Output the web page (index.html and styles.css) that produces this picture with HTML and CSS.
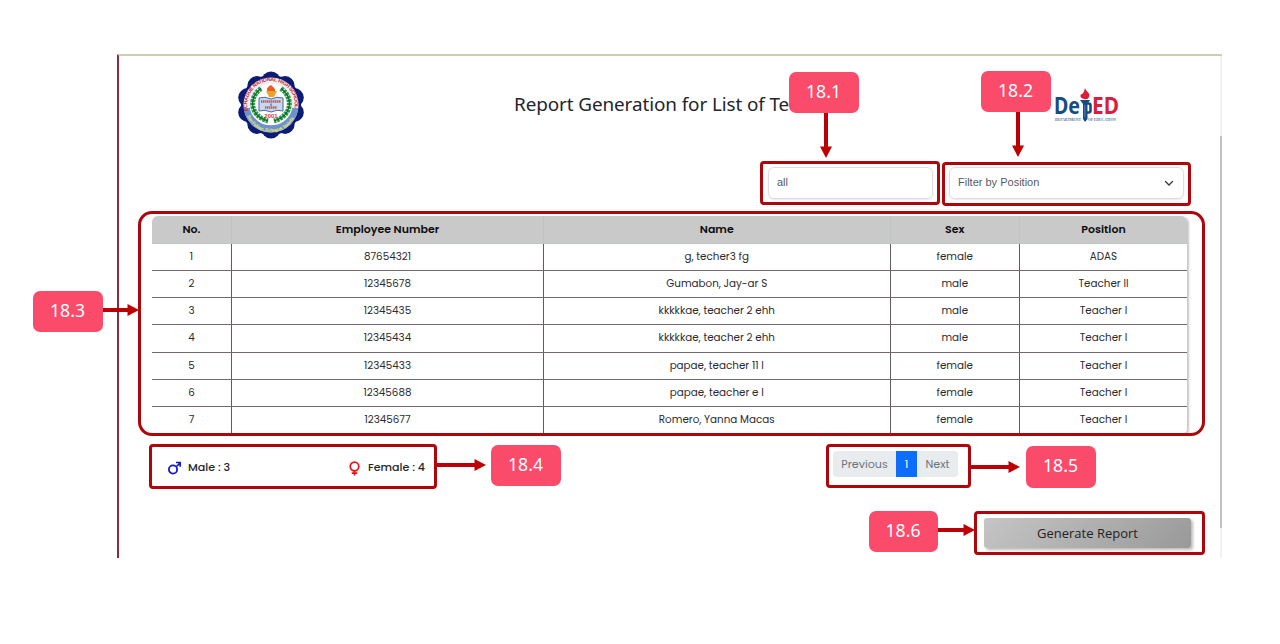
FILE: index.html
```html
<!DOCTYPE html>
<html lang="en">
<head>
<meta charset="utf-8">
<title>Report Generation</title>
<link rel="stylesheet" href="styles.css">
</head>
<body>
<main class="panel">
  <header class="head">
    <svg class="seal" viewBox="0 0 68 68">
      <g fill="#0b1c74">
        <circle cx="34" cy="34" r="30"/>
        <circle cx="34" cy="10" r="9.500"/><circle cx="48.100" cy="14.600" r="9.500"/><circle cx="57.300" cy="26.600" r="9.500"/><circle cx="57.300" cy="41.400" r="9.500"/><circle cx="48.100" cy="53.400" r="9.500"/><circle cx="34" cy="58" r="9.500"/><circle cx="19.900" cy="53.400" r="9.500"/><circle cx="10.700" cy="41.400" r="9.500"/><circle cx="10.700" cy="26.600" r="9.500"/><circle cx="19.900" cy="14.600" r="9.500"/>
      </g>
      <circle cx="34" cy="34" r="27.500" fill="#f1eef4"/>
      <path d="M6.800 37A27.500 27.500 0 0 0 61.200 37L55 37A21 21 0 0 1 13 37Z" fill="#6f92cb"/>
      <circle cx="34" cy="34" r="21.200" fill="#fff"/>
      <path d="M6.700 37A27.500 27.500 0 0 0 61.300 37H55.500A22 22 0 0 1 12.500 37Z" fill="#6f92cb"/>
      <path d="M24 17.500C11 27 13 45 31 50M44 17.500C57 27 55 45 37 50" fill="none" stroke="#2b9748" stroke-width="5" stroke-dasharray="2.600 .8"/>
      <path d="M24 17.500C11 27 13 45 31 50M44 17.500C57 27 55 45 37 50" fill="none" stroke="#0f6a2b" stroke-width="1.200"/>
      <path d="M34 14c-5 3-5 5-2 8h4c4-3 2-4-2-8z" fill="#ed5b20"/>
      <path d="M29 20h11l-3 6h-5z" fill="#e9a529"/>
      <path d="M22 27q6-2 12 1 6-3 12-1v13q-6-2-12 1-6-3-12-1z" fill="#c4daef" stroke="#5264a4" stroke-width="1"/>
      <path d="M24 30.500h20M28 36.500h12" stroke="#da5156" stroke-width="2.400" stroke-dasharray="1.500 .5"/>
      <path d="M34 32.500v2.500" stroke="#8873a6" stroke-width="1.500"/>
      <text class="seal-year" x="34" y="47">2001</text>
      <path id="arc-top" d="M11 40A23.800 23.800 0 1 1 57 40" fill="none"/>
      <path id="arc-bottom" d="M9.800 44A25.800 25.800 0 0 0 58.200 44" fill="none"/>
      <text class="seal-name"><textPath href="#arc-top" textLength="84">ECHAGUE NATIONAL HIGH SCHOOL</textPath></text>
      <text class="seal-place"><textPath href="#arc-bottom" startOffset="1" textLength="58">San Fabian, Echague, Isabela</textPath></text>
    </svg>
    <h1 class="title">Report Generation for List of Te</h1>
    <svg class="deped" viewBox="0 0 66 36">
      <text class="deped-word blue" x="0" y="26" textLength="26" lengthAdjust="spacingAndGlyphs">De</text>
      <path d="M33 15.500h1.500q2 0 2 2v5q0 2-2 2H33" fill="none" stroke="#164b83" stroke-width="2.600"/>
      <text class="deped-word red" x="38" y="26" textLength="27" lengthAdjust="spacingAndGlyphs">ED</text>
      <path d="M31 0c1 4 6 5 4 9q-1 3-5 2-5-1-3-5c1 1 3-1 4-6z" fill="#d81f35"/>
      <path d="M26 12h10l-2.500 4v15l-2.500 3-2-3V16z" fill="#164b83"/>
      <path d="M30.800 17v12" stroke="#7f9fc0" stroke-width=".7"/>
      <text class="deped-sub" x="1" y="33" textLength="26" lengthAdjust="spacingAndGlyphs">DEPARTMENT</text>
      <text class="deped-sub" x="34" y="33" textLength="28" lengthAdjust="spacingAndGlyphs">OF EDUCATION</text>
    </svg>
  </header>

  <section class="filters">
    <div class="field search">all</div>
    <div class="field select"><span>Filter by Position</span>
      <svg class="chevron" viewBox="0 0 10 7"><path d="M1.500 1.500 5 5l3.500-3.500" fill="none" stroke="#343a40" stroke-width="1.300" stroke-linecap="round"/></svg>
    </div>
  </section>

  <section class="table">
    <div class="row th"><b>No.</b><b>Employee Number</b><b>Name</b><b>Sex</b><b>Position</b></div>
    <div class="row"><span>1</span><span>87654321</span><span>g, techer3 fg</span><span>female</span><span>ADAS</span></div>
    <div class="row"><span>2</span><span>12345678</span><span>Gumabon, Jay-ar S</span><span>male</span><span>Teacher II</span></div>
    <div class="row"><span>3</span><span>12345435</span><span>kkkkkae, teacher 2 ehh</span><span>male</span><span>Teacher I</span></div>
    <div class="row"><span>4</span><span>12345434</span><span>kkkkkae, teacher 2 ehh</span><span>male</span><span>Teacher I</span></div>
    <div class="row"><span>5</span><span>12345433</span><span>papae, teacher 11 l</span><span>female</span><span>Teacher I</span></div>
    <div class="row"><span>6</span><span>12345688</span><span>papae, teacher e l</span><span>female</span><span>Teacher I</span></div>
    <div class="row"><span>7</span><span>12345677</span><span>Romero, Yanna Macas</span><span>female</span><span>Teacher I</span></div>
  </section>

  <section class="summary">
    <div class="stat male">
      <svg class="male-icon" viewBox="0 0 13 14"><path d="M8.500 5.500 12 2M8 1.500h4.200v4.200" fill="none" stroke="#1515d0" stroke-width="1.700"/><circle cx="5" cy="8.500" r="4.100" fill="none" stroke="#1515d0" stroke-width="1.800"/></svg>
      <span>Male : 3</span>
    </div>
    <div class="stat female">
      <svg class="female-icon" viewBox="0 0 11 15"><circle cx="5.500" cy="5.500" r="4.300" fill="none" stroke="#e8131b" stroke-width="1.700"/><path d="M5.500 9.800v4.600M2.700 12.200h5.600" stroke="#e8131b" stroke-width="1.700"/></svg>
      <span>Female : 4</span>
    </div>
    <nav class="pager"><span class="prev">Previous</span><span class="current">1</span><span class="next">Next</span></nav>
  </section>

  <footer class="actions"><button class="generate">Generate Report</button></footer>
  <div class="scrollbar"><div class="thumb"></div></div>
</main>

<div class="frame f1"></div><div class="frame f2"></div><div class="frame f3"></div>
<div class="frame f4"></div><div class="frame f5"></div><div class="frame f6"></div>
<svg class="arrows" viewBox="0 0 1280 644">
  <g stroke="#b80006" stroke-width="4">
    <path d="M826 112v36M1018 111v36M102 310h27M436 465h40M970 467h40M937 530h28"/>
  </g>
  <g fill="#c00000">
    <path d="M820 146.500h12l-6 11.500zM1012 145.500h12l-6 11.500zM127.500 304v12l11.500-6zM474.500 459v12l11.500-6zM1008.500 461v12l11.500-6zM963.500 524v12l11.500-6z"/>
  </g>
</svg>
<div class="tag t1">18.1</div><div class="tag t2">18.2</div><div class="tag t3">18.3</div>
<div class="tag t4">18.4</div><div class="tag t5">18.5</div><div class="tag t6">18.6</div>
</body>
</html>
```
FILE: styles.css
```css
* { box-sizing: border-box; }
body { margin: 0; position: relative; width: 1280px; height: 644px; padding: 54px 58px 0 117px; background: #fff; overflow: hidden; }

.panel { position: relative; height: 504px; display: flex; flex-direction: column; border-left: 2px solid #8a2b3d; border-top: 2px solid #cfceb5; }

.head { height: 111px; display: flex; align-items: flex-start; padding-left: 118px; }
.seal { width: 68px; height: 68px; margin-top: 15px; flex: none; }
.seal-name { font: bold 5.2px "Liberation Sans", sans-serif; fill: #c92634; }
.seal-place { font: bold 4.4px "Liberation Sans", sans-serif; fill: #f0ee62; }
.seal-year { font: bold 6px "Liberation Sans", sans-serif; fill: #d43f33; text-anchor: middle; }
.title { margin: 33px 0 0 209px; width: 275px; flex: none; font: 400 18.9px/31px "Noto Sans", sans-serif; letter-spacing: -0.1px; color: #22252b; white-space: nowrap; }
.deped { width: 66px; height: 36px; margin: 32px 0 0 265px; flex: none; overflow: visible; }
.deped-word { font: bold 23px "Noto Sans", sans-serif; }
.blue { fill: #164b83; }
.red { fill: #d81f3c; }
.deped-sub { font: bold 4px "Liberation Serif", serif; fill: #56799e; }

.filters { display: flex; justify-content: flex-end; gap: 16px; height: 49px; padding-right: 38px; }
.field { height: 32px; border: 1px solid #dcdce6; border-radius: 6px; box-shadow: 0 1px 2px #e5e5ec; font: 11px/28px "Liberation Sans", Arial, sans-serif; color: #565c63; padding: 0 8px; }
.search { width: 165px; }
.select { width: 235px; display: flex; justify-content: space-between; align-items: flex-start; padding-right: 9px; }
.chevron { width: 10px; height: 7px; margin-top: 12px; }

.table { margin: 0 35px 0 33px; height: 217px; border-radius: 6px 6px 4px 4px; overflow: hidden; box-shadow: 2px 1px 2px #c8c8c8; font: 10.35px Poppins, Inter, sans-serif; color: #2b2b30; display: grid; grid-template-rows: 27.8px 27.2px repeat(5, 27.2px) 1fr; }
.row { display: grid; grid-template-columns: 80px 312px 346.5px 129.5px 1fr; border-bottom: 1px solid #75686b; }
.row:last-child { border-bottom: 0; }
.row > * { display: flex; align-items: center; justify-content: center; border-right: 1px solid #655a5d; }
.row > :last-child { border-right: 0; }
.th { background: #c9c9c9; border-bottom-color: #bdc5c7; color: #0c0c0c; font-size: 11px; }
.th b { border-color: #bec5c7; font-weight: 600; }

.summary { display: flex; height: 85px; padding: 18px 0 0 49px; font: 500 11.1px/32px Poppins, Inter, sans-serif; color: #25252a; }
.stat { display: flex; }
.male { width: 181px; gap: 7px; }
.male-icon { width: 13px; height: 14px; margin-top: 10px; }
.female { width: 484px; gap: 8px; }
.female-icon { width: 11px; height: 15px; margin-top: 10px; }
.pager { display: flex; width: 125px; height: 26px; line-height: 27px; border-radius: 4px; overflow: hidden; background: #e9ecef; color: #6c757d; font-weight: 400; text-align: center; }
.prev { width: 63px; }
.current { width: 21px; background: #0d6efd; color: #fff; }
.next { width: 41px; }

.actions { display: flex; justify-content: flex-end; padding-right: 31px; }
.generate { width: 207px; height: 30px; padding: 0; border: 0; border-radius: 3px; background: linear-gradient(135deg, #c5c5c5, #999); box-shadow: 2px 2px 3px #bbb; font: 13px/30px "Open Sans", sans-serif; color: #222; }

.scrollbar { position: absolute; right: 0; top: 0; width: 2px; height: 502px; background: #f0f0f0; }
.thumb { height: 392px; margin-top: 80px; background: #c1c1c1; }

/* Callouts over the panel */
.frame { position: absolute; border: 3px solid #ad060b; border-radius: 4px; }
.f1 { left: 760px; top: 161px; width: 180px; height: 44px; }
.f2 { left: 942px; top: 162px; width: 249px; height: 44px; }
.f3 { left: 138px; top: 211px; width: 1067px; height: 225px; border-radius: 14px; }
.f4 { left: 149px; top: 444px; width: 288px; height: 45px; }
.f5 { left: 826px; top: 444px; width: 145px; height: 44px; }
.f6 { left: 974px; top: 511px; width: 231px; height: 44px; }
.arrows { position: absolute; left: 0; top: 0; width: 1280px; height: 644px; fill: none; }
.tag { position: absolute; width: 70px; height: 41px; border-radius: 7px; background: #fb4b6b; color: #fff; font: 400 17.6px/39px "Noto Sans", "Open Sans", sans-serif; text-align: center; padding-right: 1px; }
.t1 { left: 789px; top: 72px; }
.t2 { left: 981px; top: 71px; }
.t3 { left: 33px; top: 291px; }
.t4 { left: 491px; top: 445px; }
.t5 { left: 1026px; top: 446px; height: 42px; }
.t6 { left: 869px; top: 511px; width: 69px; }
```
